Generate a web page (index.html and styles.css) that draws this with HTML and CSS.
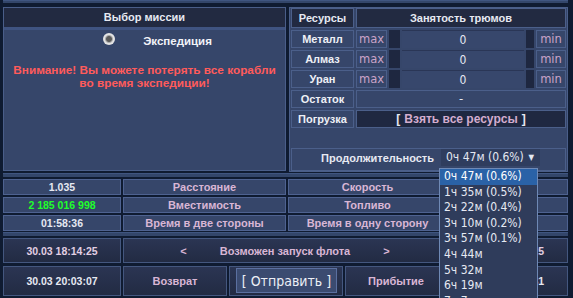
FILE: index.html
```html
<!DOCTYPE html>
<html lang="ru">

<head>
  <meta charset="UTF-8" />
  <title>Отправка флота</title>
  <link rel="stylesheet" href="styles.css">
</head>

<body>
  <div class="page">
    <div class="band band-top"></div>

    <div class="top">
      <!-- выбор миссии -->
      <div class="panel mission">
        <div class="panel-head">Выбор миссии</div>
        <div class="mission-opt">
          <span class="radio"></span>
          <span class="mission-name">Экспедиция</span>
        </div>
        <p class="warn">Внимание! Вы можете потерять все корабли<br>во время экспедиции!</p>
      </div>

      <!-- ресурсы -->
      <div class="panel cargo">
        <div class="res-grid">
          <div class="cell head">Ресурсы</div>
          <div class="cell head span5">Занятость трюмов</div>

          <div class="cell label">Металл</div>
          <div class="cell lim">max</div>
          <div class="bar"></div>
          <div class="amount">0</div>
          <div class="bar"></div>
          <div class="cell lim">min</div>

          <div class="cell label">Алмаз</div>
          <div class="cell lim">max</div>
          <div class="bar"></div>
          <div class="amount">0</div>
          <div class="bar"></div>
          <div class="cell lim">min</div>

          <div class="cell label">Уран</div>
          <div class="cell lim">max</div>
          <div class="bar"></div>
          <div class="amount">0</div>
          <div class="bar"></div>
          <div class="cell lim">min</div>

          <div class="cell label">Остаток</div>
          <div class="cell span5 rest">-</div>

          <div class="cell label">Погрузка</div>
          <div class="cell span5 load"><b>[</b> <span>Взять все ресурсы</span> <b>]</b></div>
        </div>

        <div class="duration">
          <span class="duration-label">Продолжительность</span>
          <div class="select">0ч 47м (0.6%) <span class="arrow">▼</span></div>
        </div>
      </div>
    </div>

    <div class="band"></div>

    <!-- значения справа закрыты раскрытым списком -->
    <div class="info-grid">
      <div class="icell num">1.035</div>
      <div class="icell pink">Расстояние</div>
      <div class="icell pink">Скорость</div>
      <div class="icell num"></div>

      <div class="icell num green">2 185 016 998</div>
      <div class="icell pink">Вместимость</div>
      <div class="icell pink">Топливо</div>
      <div class="icell num"></div>

      <div class="icell num">01:58:36</div>
      <div class="icell pink">Время в две стороны</div>
      <div class="icell pink">Время в одну сторону</div>
      <div class="icell num"></div>
    </div>

    <div class="band"></div>

    <div class="time-grid">
      <div class="tcell num soft">30.03 18:14:25</div>
      <div class="tcell span3 launch">
        <span class="pink">&lt;</span>
        <span class="pink">Возможен запуск флота</span>
        <span class="pink">&gt;</span>
      </div>
      <div class="tcell num soft">30.03 18:14:25</div>

      <div class="tcell num tall">30.03 20:03:07</div>
      <div class="tcell tall pink">Возврат</div>
      <div class="tcell tall send-cell"><button class="send">[ Отправить ]</button></div>
      <div class="tcell tall pink">Прибытие</div>
      <div class="tcell num tall">30.03 19:13:31</div>
    </div>
  </div>

  <!-- раскрытый список длительности -->
  <div class="dropdown">
    <div class="opt selected">0ч 47м (0.6%)</div>
    <div class="opt">1ч 35м (0.5%)</div>
    <div class="opt">2ч 22м (0.4%)</div>
    <div class="opt">3ч 10м (0.2%)</div>
    <div class="opt">3ч 57м (0.1%)</div>
    <div class="opt">4ч 44м</div>
    <div class="opt">5ч 32м</div>
    <div class="opt">6ч 19м</div>
    <div class="opt">7ч 7м</div>
  </div>
</body>

</html>
```

FILE: styles.css
```css
/* общий фон */
body {
  margin: 0;
  width: 573px;
  height: 298px;
  overflow: hidden;
  position: relative;
  background-color: #0f1b31;
  color: #e6e9f2;
  font-family: "Liberation Sans", Arial, sans-serif;
  font-size: 11px;
}

.page {
  padding: 0 5px 0 3px;
}

/* полосы-разделители */
.band {
  height: 4px;
  margin: 1px 0 2px;
  background-color: #33466a;
  border-top: 1px solid #3f5580;
  box-sizing: border-box;
}

.band-top {
  height: 3px;
  margin: 0 0 4px;
}

.top {
  display: flex;
  gap: 3px;
  height: 165px;
}

.panel {
  background-color: #36466a;
  border: 1px solid #4a5e89;
  box-sizing: border-box;
}

/* миссия */
.mission {
  width: 283px;
  height: 164px;
}

.panel-head {
  height: 19px;
  line-height: 19px;
  background-color: #222a41;
  border-bottom: 3px solid #3f5380;
  text-align: center;
  font-weight: bold;
}

.mission-opt {
  display: flex;
  justify-content: center;
  align-items: center;
  gap: 28px;
  margin-top: 1px;
  padding-left: 26px;
  height: 20px;
}

.radio {
  width: 12px;
  height: 12px;
  margin-bottom: 5px;
  border-radius: 50%;
  background: radial-gradient(circle, #5a5a5a 0 2.5px, #9a9a9a 3.2px, #e4e4e4 4.5px);
}

.mission-name {
  font-size: 11.5px;
  font-weight: bold;
  color: #f2f3f8;
}

.warn {
  margin: 13px 0 0;
  text-align: center;
  color: #ff5b5b;
  font-weight: bold;
  font-size: 11.8px;
  line-height: 13px;
}

/* ресурсы */
.cargo {
  flex: 1;
  padding: 0 1px;
  display: flex;
  flex-direction: column;
}

.res-grid {
  display: grid;
  grid-template-columns: 63px 31px 11px 1fr 8px 30px;
  grid-template-rows: 20px;
  grid-auto-rows: 18px;
  gap: 2px;
}

.cell {
  display: flex;
  align-items: center;
  justify-content: center;
  border: 1px solid #4b5f8a;
  box-sizing: border-box;
}

.head {
  background-color: #222a41;
  font-weight: bold;
}

.span5 {
  grid-column: span 5;
}

.label {
  font-weight: bold;
  color: #eef0f6;
}

.lim,
.rest {
  font-family: "DejaVu Sans", sans-serif;
  font-size: 11.5px;
}

.lim {
  color: #caa4c8;
}

.bar {
  background-color: #1e2740;
}

.amount {
  display: flex;
  align-items: center;
  justify-content: center;
  background-color: #37476c;
  border-top: 1px solid #2a3656;
  font-family: "DejaVu Sans Condensed", "DejaVu Sans", sans-serif;
  font-stretch: condensed;
  font-size: 12px;
}

.load {
  background-color: #1f2841;
  font-weight: bold;
  font-size: 12px;
  gap: 4px;
}

.load span {
  color: #d4adcf;
}

.duration {
  margin-top: 20px;
  height: 23px;
  border: 1px solid #4b5f8a;
  box-sizing: border-box;
  display: flex;
  justify-content: flex-end;
  gap: 7px;
  padding-right: 25px;
}

.duration-label {
  font-weight: bold;
  line-height: 17px;
  margin-top: 1px;
}

.select {
  width: 99px;
  height: 17px;
  line-height: 17px;
  box-sizing: border-box;
  padding-left: 5px;
  background-color: #2f3d5e;
  font-family: "DejaVu Sans Condensed", "DejaVu Sans", sans-serif;
  font-stretch: condensed;
  font-size: 12px;
  color: #e3e8f2;
  position: relative;
}

.arrow {
  position: absolute;
  right: 6px;
  top: 0;
  font-size: 8px;
}

/* средняя таблица */
.info-grid {
  display: grid;
  grid-template-columns: 118px 163px 159px 1fr;
  grid-auto-rows: 16px;
  gap: 2px;
}

.icell {
  background-color: #36466a;
  border: 1px solid #4e6290;
  box-sizing: border-box;
  text-align: center;
  line-height: 14px;
  font-weight: bold;
}

.num {
  font-size: 10.5px;
}

.pink {
  color: #d9b6d5;
}

.green {
  color: #1fff2a;
}

/* время */
.time-grid {
  display: grid;
  grid-template-columns: 118px 104px 114px 102px 1fr;
  grid-template-rows: 25px 30px;
  gap: 3px 2px;
}

.tcell {
  display: flex;
  align-items: center;
  justify-content: center;
  background: linear-gradient(#2b3553, #222b43);
  border: 1px solid #44577f;
  box-sizing: border-box;
  font-weight: bold;
}

.soft {
  color: #e2cfe3;
}

.span3 {
  grid-column: span 3;
}

.launch {
  gap: 33px;
}

.send-cell {
  padding: 1px 5px 2px 6px;
}

.send {
  width: 100%;
  height: 100%;
  background-color: #3b4b70;
  border: 1px solid #5b70a0;
  color: #eceff6;
  font-family: "DejaVu Sans Condensed", "DejaVu Sans", sans-serif;
  font-stretch: condensed;
  font-size: 14px;
  padding: 0;
}

/* раскрытый список */
.dropdown {
  position: absolute;
  left: 439px;
  top: 168px;
  width: 99px;
  height: 140px;
  box-sizing: border-box;
  border: 1px solid #6f89b5;
  background-color: #2f3c5b;
  font-family: "DejaVu Sans Condensed", "DejaVu Sans", sans-serif;
  font-stretch: condensed;
  font-size: 12px;
  color: #e6eaf3;
}

.opt {
  height: 15.6px;
  line-height: 15.6px;
  padding-left: 4px;
}

.opt.selected {
  background-color: #2a62a7;
  color: #ffffff;
}
```
